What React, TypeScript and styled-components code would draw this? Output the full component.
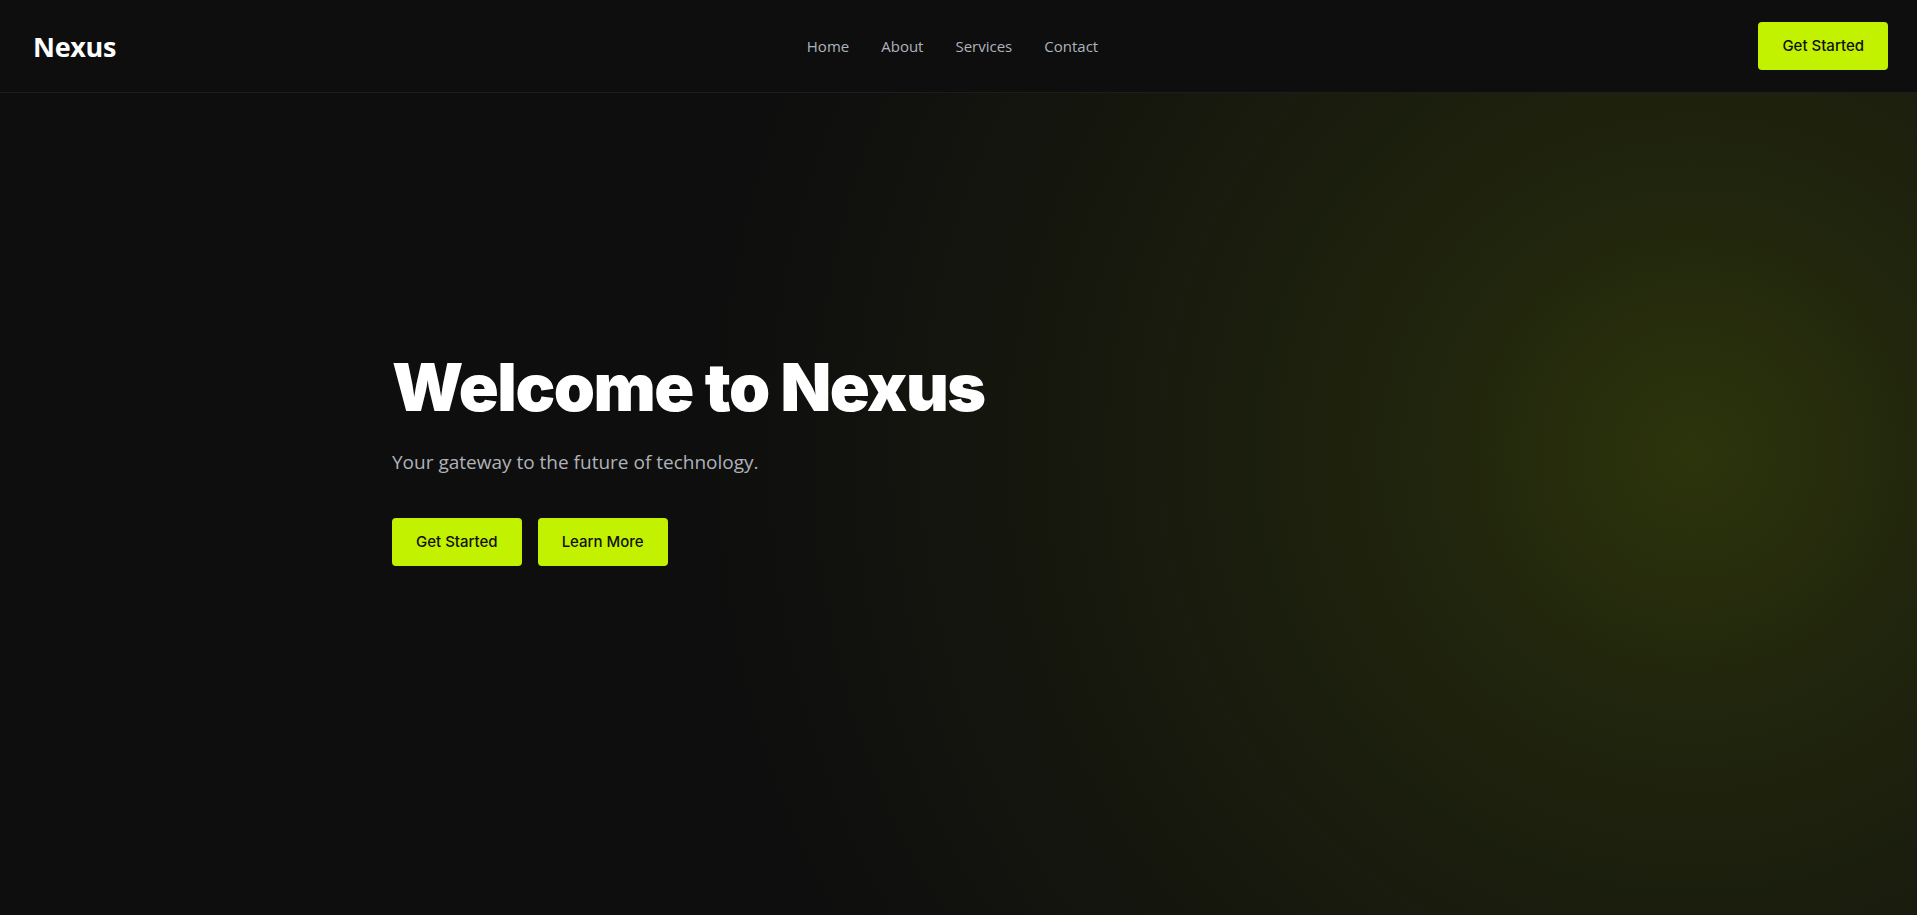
import React from 'react';
import styled, { createGlobalStyle } from 'styled-components';

const GlobalStyle = createGlobalStyle`
  html, body {
    margin: 0;
    padding: 0;
    background: #0e0e0e;
    font-family: "Open Sans", "Noto Sans", sans-serif;
    overflow: hidden;
  }
  * { box-sizing: border-box; }
`;

const Page = styled.div`
  min-height: 100vh;
  background: #0e0e0e;
  color: #fff;
`;

const Header = styled.header`
  height: 93px;
  display: grid;
  grid-template-columns: 1fr auto 1fr;
  align-items: center;
  padding: 0 29px 0 33px;
  border-bottom: 1px solid #1d1d1d;
  background: #0e0e0e;
`;

const Logo = styled.a`
  font-size: 27px;
  font-weight: 700;
  color: #fff;
  text-decoration: none;
  letter-spacing: -0.3px;
  justify-self: start;
`;

const Nav = styled.nav`
  display: flex;
  gap: 32px;
  margin-right: 16px;
`;

const NavLink = styled.a`
  font-size: 15px;
  color: #aeb3bb;
  text-decoration: none;
`;

const HeaderActions = styled.div`
  justify-self: end;
`;

const Button = styled.button`
  background: #c2f200;
  color: #111;
  border: none;
  border-radius: 4px;
  padding: 12px 24px;
  height: 48px;
  font-family: "Inter", "Open Sans", sans-serif;
  font-size: 15px;
  font-weight: 500;
  line-height: 24px;
  cursor: pointer;
`;

const Hero = styled.section`
  height: calc(100vh - 93px);
  background:
    radial-gradient(
      circle at 1693px 360px,
      rgba(194, 242, 0, 0.17) 0,
      rgba(194, 242, 0, 0.1) 260px,
      rgba(194, 242, 0, 0.05) 580px,
      rgba(194, 242, 0, 0.015) 860px,
      rgba(194, 242, 0, 0) 1000px
    ),
    #0e0e0e;
`;

const HeroInner = styled.div`
  max-width: 1133px;
  margin: 0 auto;
  padding-top: 258px;
`;

const Title = styled.h1`
  margin: 0;
  font-family: "Inter", "Lato", sans-serif;
  font-weight: 900;
  font-size: 66px;
  line-height: 1.1;
  letter-spacing: -1.45px;
  color: #fff;
`;

const Subtitle = styled.p`
  margin: 24px 0 0;
  font-size: 19px;
  line-height: 28px;
  color: #aeb2b9;
`;

const Actions = styled.div`
  display: flex;
  gap: 16px;
  margin-top: 42px;
`;

export default function App() {
  return (
    <Page>
      <GlobalStyle />
      <Header>
        <Logo href="#">Nexus</Logo>
        <Nav>
          <NavLink href="#">Home</NavLink>
          <NavLink href="#">About</NavLink>
          <NavLink href="#">Services</NavLink>
          <NavLink href="#">Contact</NavLink>
        </Nav>
        <HeaderActions>
          <Button>Get Started</Button>
        </HeaderActions>
      </Header>
      <Hero>
        <HeroInner>
          <Title>Welcome to Nexus</Title>
          <Subtitle>Your gateway to the future of technology.</Subtitle>
          <Actions>
            <Button>Get Started</Button>
            <Button>Learn More</Button>
          </Actions>
        </HeroInner>
      </Hero>
    </Page>
  );
}
